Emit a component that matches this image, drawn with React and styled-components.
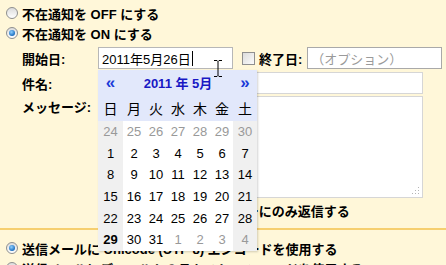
import React from 'react';
import styled, { createGlobalStyle } from 'styled-components';

const GlobalStyle = createGlobalStyle`
  html, body {
    margin: 0;
    padding: 0;
    background: #fff7d9;
  }
  body {
    font-family: "Liberation Sans", "Noto Sans CJK JP", sans-serif;
    font-size: 13px;
    color: #000;
  }
`;

const Page = styled.div`
  position: relative;
  width: 446px;
  height: 265px;
  overflow: hidden;
  padding-top: 3px;
  box-sizing: border-box;
`;

const OptionRow = styled.div`
  display: flex;
  align-items: center;
  gap: 4px;
  height: 20px;
  padding-left: 6px;
  margin-top: ${p => p.$top || 0}px;
  font-weight: bold;
  white-space: nowrap;
`;

const Radio = styled.span`
  position: relative;
  flex: none;
  width: 12px;
  height: 12px;
  border-radius: 50%;
  box-sizing: border-box;
  border: 1px solid #8e8f8f;
  background: linear-gradient(#dcdcdc, #ffffff);
  &::after {
    content: '';
    display: ${p => (p.$checked ? 'block' : 'none')};
    position: absolute;
    left: 2px;
    top: 2px;
    width: 6px;
    height: 6px;
    border-radius: 50%;
    background: radial-gradient(circle at 40% 35%, #8fd0ff, #1c6fc0 70%, #164f8a);
  }
`;

const Checkbox = styled.span`
  flex: none;
  width: 13px;
  height: 13px;
  box-sizing: border-box;
  border: 1px solid #8f8f8f;
  background: linear-gradient(135deg, #dcdcdc, #fbfbfb);
`;

const Form = styled.div`
  margin-top: 4px;
  padding-left: 22px;
`;

const FieldRow = styled.div`
  display: flex;
  align-items: ${p => (p.$top ? 'flex-start' : 'center')};
  margin-top: ${p => p.$gap || 0}px;
`;

const Label = styled.div`
  flex: none;
  width: 76px;
  padding-top: ${p => p.$pad || 0}px;
  font-weight: bold;
  white-space: nowrap;
`;

const TextBox = styled.div`
  display: flex;
  align-items: center;
  flex: none;
  width: ${p => p.$w}px;
  height: ${p => p.$h || 22}px;
  box-sizing: border-box;
  padding-left: 3px;
  border: 1px solid ${p => p.$border || '#b7b7b7'};
  background: #fff;
  color: ${p => (p.$placeholder ? '#9a9a9a' : '#000')};
  white-space: nowrap;
`;

const Caret = styled.span`
  display: inline-block;
  width: 1px;
  height: 15px;
  margin-left: 1px;
  background: #000;
`;

const EndLabel = styled.div`
  margin: 0 5px 0 4px;
  font-weight: bold;
`;

const Area = styled.div`
  position: relative;
  width: 325px;
  height: 102px;
  box-sizing: border-box;
  border: 1px solid #d6d6d6;
  background: #fff;
`;

const Grip = styled.svg`
  position: absolute;
  right: 2px;
  bottom: 2px;
`;

const ReplyRow = styled.div`
  display: flex;
  align-items: center;
  gap: 5px;
  height: 18px;
  margin: 3px 0 0 76px;
  font-weight: bold;
  white-space: nowrap;
`;

const Divider = styled.div`
  height: 2px;
  margin-top: 9px;
  background: #f6cf6f;
`;

const Calendar = styled.div`
  position: absolute;
  left: 98px;
  top: 70px;
  width: 159px;
  background: #fff;
  box-shadow: 1px 1px 2px rgba(0, 0, 0, 0.18);
`;

const CalGrid = styled.div`
  display: grid;
  grid-template-columns: 25px repeat(5, 22px) 24px;
  grid-auto-rows: ${p => p.$row}px;
  background: ${p => p.$bg || '#fff'};
`;

const Nav = styled.div`
  display: flex;
  align-items: center;
  justify-content: center;
  color: #1a3ad8;
  font-weight: bold;
  font-size: 17px;
`;

const Title = styled.div`
  grid-column: span 5;
  display: flex;
  align-items: center;
  justify-content: center;
  color: #1818c4;
  font-weight: bold;
`;

const DayName = styled.div`
  display: flex;
  align-items: center;
  justify-content: center;
  font-size: 14px;
`;

const Day = styled.div`
  display: flex;
  align-items: center;
  justify-content: center;
  font-size: 13px;
  background: ${p => (p.$weekend ? '#f0f0f0' : '#fff')};
  color: ${p => (p.$muted ? '#999' : '#000')};
  font-weight: ${p => (p.$bold ? 'bold' : 'normal')};
`;

const Cursor = styled.svg`
  position: absolute;
  left: 213px;
  top: 60px;
`;

const weeks = [
  [24, 25, 26, 27, 28, 29, 30],
  [1, 2, 3, 4, 5, 6, 7],
  [8, 9, 10, 11, 12, 13, 14],
  [15, 16, 17, 18, 19, 20, 21],
  [22, 23, 24, 25, 26, 27, 28],
  [29, 30, 31, 1, 2, 3, 4],
];

function DatePicker() {
  return (
    <Calendar>
      <CalGrid $row={25} $bg="#e2e8fb">
        <Nav>«</Nav>
        <Title>2011 年 5月</Title>
        <Nav>»</Nav>
      </CalGrid>
      <CalGrid $row={26} $bg="#e2e8fb">
        {['日', '月', '火', '水', '木', '金', '土'].map(d => (
          <DayName key={d}>{d}</DayName>
        ))}
      </CalGrid>
      <CalGrid $row={21.6}>
        {weeks.map((week, w) =>
          week.map((d, i) => (
            <Day
              key={w + '-' + i}
              $weekend={i === 0 || i === 6}
              $muted={(w === 0) || (w === 5 && i > 2)}
              $bold={w === 5 && i === 0}
            >
              {d}
            </Day>
          ))
        )}
      </CalGrid>
    </Calendar>
  );
}

export default function App() {
  return (
    <Page>
      <GlobalStyle />
      <OptionRow>
        <Radio />
        不在通知を OFF にする
      </OptionRow>
      <OptionRow>
        <Radio $checked />
        不在通知を ON にする
      </OptionRow>

      <Form>
        <FieldRow>
          <Label>開始日:</Label>
          <TextBox $w={135}>
            2011年5月26日<Caret />
          </TextBox>
          <span style={{ width: 9 }} />
          <Checkbox />
          <EndLabel>終了日:</EndLabel>
          <TextBox $w={135} $border="#a9a9a9" $placeholder>
            （オプション）
          </TextBox>
        </FieldRow>
        <FieldRow $gap={3}>
          <Label>件名:</Label>
          <TextBox $w={325} $border="#d6d6d6" />
        </FieldRow>
        <FieldRow $gap={2} $top>
          <Label $pad={1}>メッセージ:</Label>
          <Area>
            <Grip width="8" height="8" viewBox="0 0 8 8">
              <g fill="#b5b5b5">
                <rect x="6" y="0" width="1" height="1" />
                <rect x="3" y="3" width="1" height="1" />
                <rect x="6" y="3" width="1" height="1" />
                <rect x="0" y="6" width="1" height="1" />
                <rect x="3" y="6" width="1" height="1" />
                <rect x="6" y="6" width="1" height="1" />
              </g>
            </Grip>
          </Area>
        </FieldRow>
        <ReplyRow>
          <Checkbox />
          連絡先リストのユーザーにのみ返信する
        </ReplyRow>
      </Form>

      <Divider />
      <OptionRow $top={8}>
        <Radio $checked />
        送信メールに Unicode (UTF-8) エンコードを使用する
      </OptionRow>
      <OptionRow>
        <Radio />
        送信メールにデフォルトのテキスト エンコードを使用する
      </OptionRow>

      <DatePicker />
      <Cursor width="10" height="17" viewBox="0 0 10 17">
        <path d="M1 0.5h3l1 1 1-1h3M5 1.5v14M1 16.5h3l1-1 1 1h3" stroke="#000" strokeWidth="1" fill="none" />
      </Cursor>
    </Page>
  );
}
